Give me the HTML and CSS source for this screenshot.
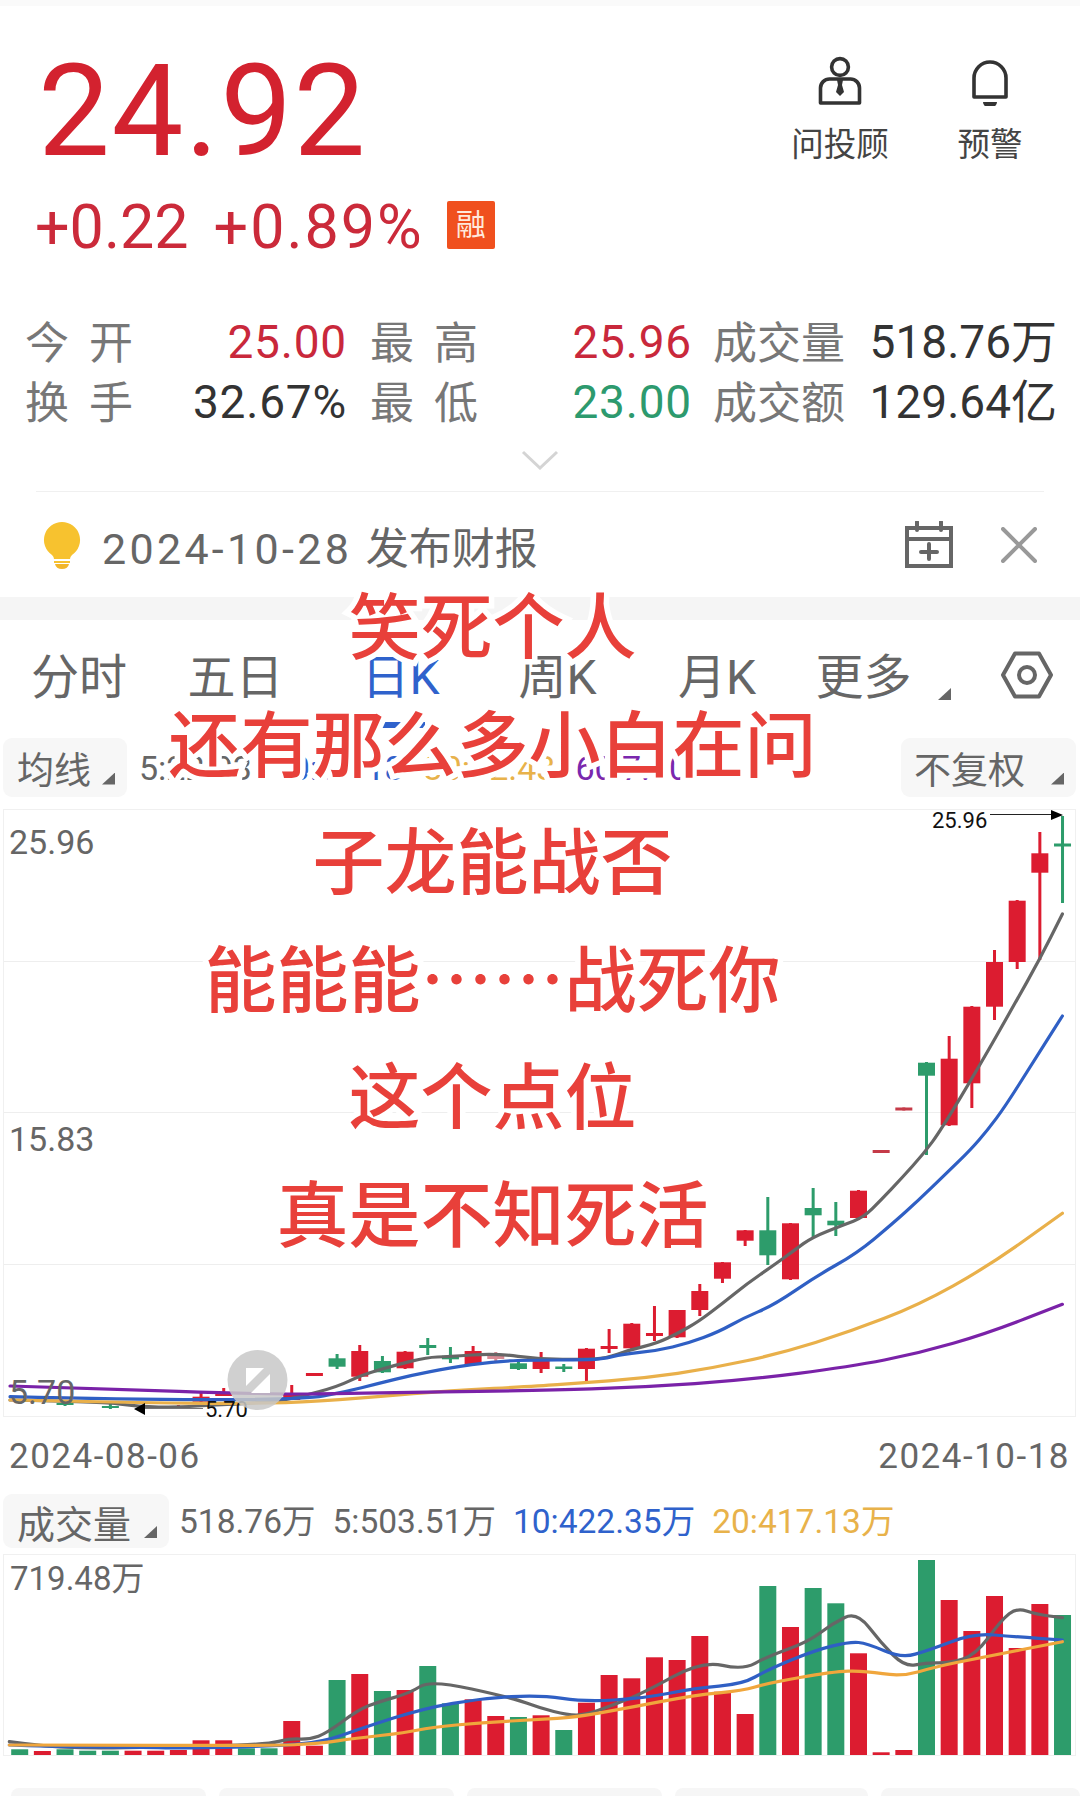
FILE: index.html
```html
<!DOCTYPE html>
<html>
<head>
<meta charset="utf-8">
<meta name="viewport" content="width=device-width, initial-scale=1">
<title>24.92</title>
<link rel="stylesheet" href="styles.css">
</head>
<body>
<div class="page">

  <div class="quote">
    <div class="price-box">
      <div class="price">24.92</div>
      <div class="change">
        <span>+0.22</span>
        <span class="pct">+0.89%</span>
        <span class="rong">融</span>
      </div>
    </div>
    <div class="actions">
      <div class="action">
        <svg width="48" height="50" viewBox="0 0 48 50" fill="none" stroke="#333" stroke-width="3.6">
          <circle cx="24" cy="11" r="8.4"/>
          <path d="M4.5 47V32a9 9 0 0 1 9-9h21a9 9 0 0 1 9 9v15z" stroke-linejoin="round"/>
          <path d="M21 24h6l-1 5 2 7-4 4-4-4 2-7z" fill="#333" stroke="none"/>
        </svg>
        <span>问投顾</span>
      </div>
      <div class="action">
        <svg width="48" height="50" viewBox="0 0 48 50" fill="none" stroke="#333" stroke-width="3.6">
          <path d="M8 41V22a16 16 0 0 1 32 0v19z" stroke-linejoin="round"/>
          <path d="M17 46h14a7 6 0 0 1-14 0z" fill="#333" stroke="none"/>
        </svg>
        <span>预警</span>
      </div>
    </div>
  </div>

  <div class="stats">
    <div class="lbl spaced"><span>今</span><span>开</span></div>
    <div class="val red">25.00</div>
    <div class="lbl spaced"><span>最</span><span>高</span></div>
    <div class="val red">25.96</div>
    <div class="lbl">成交量</div>
    <div class="val cn">518.76万</div>
    <div class="lbl spaced"><span>换</span><span>手</span></div>
    <div class="val">32.67%</div>
    <div class="lbl spaced"><span>最</span><span>低</span></div>
    <div class="val green">23.00</div>
    <div class="lbl">成交额</div>
    <div class="val cn">129.64亿</div>
  </div>

  <div class="expand">
    <svg width="38" height="20" viewBox="0 0 38 20" fill="none" stroke="#d4d4d4" stroke-width="3"><path d="M2 2l17 16L36 2"/></svg>
  </div>

  <div class="notice">
    <svg class="bulb" width="38" height="48" viewBox="0 0 38 48">
      <path d="M19 1a18 18 0 0 1 10 33q-2 2-2 4H11q0-2-2-4A18 18 0 0 1 19 1z" fill="#f7c22f"/>
      <path d="M11 40h16v2H11z" fill="#f7c22f"/>
      <path d="M12 43h14q-1 5-7 5t-7-5z" fill="#f2b62a"/>
    </svg>
    <div class="notice-text"><span class="date">2024-10-28</span> 发布财报</div>
    <svg class="cal" width="50" height="48" viewBox="0 0 50 48" fill="none" stroke="#666" stroke-width="4">
      <path d="M3 7h44v38H3zM3 18h44"/>
      <path d="M13 1v8M37 1v8" stroke-linecap="round"/>
      <path d="M17 31h16M25 23v15" stroke-linecap="round"/>
    </svg>
    <svg class="close" width="36" height="36" viewBox="0 0 36 36" fill="none" stroke="#999" stroke-width="4" stroke-linecap="round"><path d="M2 2l32 32M34 2L2 34"/></svg>
  </div>

  <div class="band"></div>

  <div class="tabs">
    <div>分时</div>
    <div>五日</div>
    <div class="on">日K<i class="bar"></i></div>
    <div>周K</div>
    <div>月K</div>
    <div>更多</div>
    <i class="caret tab-caret"></i>
    <svg class="gear" width="52" height="48" viewBox="0 0 52 48" fill="none" stroke="#666" stroke-width="4">
      <path d="M14 2.5h24L50 24 38 45.5H14L2 24z" stroke-linejoin="round"/>
      <circle cx="26" cy="24" r="8"/>
    </svg>
  </div>

  <div class="legend">
    <div class="pick">均线<i class="caret"></i></div>
    <div class="ma-vals">
      <span>5:22.03</span>
      <span class="blue">10:17.18</span>
      <span class="orange">30:12.43</span>
      <span class="purple">60:7.80</span>
    </div>
    <div class="pick wide">不复权<i class="caret"></i></div>
  </div>

  <svg id="kline" class="chart" width="1080" height="609" viewBox="0 809 1080 609"></svg>

  <div class="dates">
    <span>2024-08-06</span>
    <span>2024-10-18</span>
  </div>

  <div class="legend vol-legend">
    <div class="pick">成交量<i class="caret"></i></div>
    <div class="vol-vals">
      <span>518.76万</span>
      <span>5:503.51万</span>
      <span class="blue">10:422.35万</span>
      <span class="orange">20:417.13万</span>
    </div>
  </div>

  <svg id="volume" class="chart" width="1080" height="204" viewBox="0 1554 1080 204"></svg>

  <div class="foot">
    <div class="f1"></div><div class="f2"></div><div class="f3"></div><div class="f4"></div><div class="f5"></div>
  </div>

  <div class="caption">
    <div>笑死个人</div>
    <div>还有那么多小白在问</div>
    <div>子龙能战否</div>
    <div>能能能……战死你</div>
    <div>这个点位</div>
    <div>真是不知死活</div>
  </div>
</div>
<script src="chart.js"></script>
</body>
</html>
```

FILE: styles.css
```css
* {
  box-sizing: border-box;
}

body {
  margin: 0;
  background-color: #fff;
  font-family: Roboto, "Noto Sans CJK SC", sans-serif;
  color: #666;
}

.page {
  position: relative;
  width: 1080px;
  height: 1796px;
  overflow: hidden;
}

.quote {
  display: flex;
  justify-content: space-between;
  height: 312px;
  padding: 0 15px 0 38px;
  border-top: 6px solid #fafafa;
}

.price {
  margin-top: 35px;
  height: 140px;
  font-size: 128px;
  line-height: 140px;
  letter-spacing: 1.5px;
  color: #d3222f;
}

.change {
  display: flex;
  align-items: center;
  gap: 25px;
  margin: 21px 0 0 -3px;
  height: 50px;
  font-size: 61px;
  line-height: 50px;
  color: #cb2a3a;
}

.pct {
  letter-spacing: 2px;
}

.rong {
  width: 48px;
  height: 48px;
  margin: -4px 0 0 -2px;
  border-radius: 2px;
  background-color: #f0501e;
  color: #ffe9dc;
  font-size: 30px;
  line-height: 48px;
  text-align: center;
}

.actions {
  display: flex;
  padding-top: 50px;
}

.action {
  display: flex;
  flex-direction: column;
  align-items: center;
  width: 150px;
  font-size: 32.5px;
  line-height: 40px;
  color: #444;
}

.action span {
  margin-top: 19px;
}

.stats {
  display: grid;
  grid-template-columns: 108px 214px 133px 212px 158px 207px;
  grid-auto-rows: 60px;
  padding-left: 25px;
  align-items: center;
}

.lbl {
  padding-bottom: 5px;
  font-size: 44px;
  color: #777;
  white-space: nowrap;
}

.lbl.spaced {
  display: flex;
  justify-content: space-between;
  width: 108px;
}

.stats .lbl:nth-child(6n + 3) {
  margin-left: 23px;
}

.stats .lbl:nth-child(6n + 5) {
  margin-left: 21px;
}

.val {
  font-size: 46px;
  line-height: 60px;
  letter-spacing: 0.8px;
  text-align: right;
  color: #333;
  white-space: nowrap;
}

.val.cn {
  letter-spacing: 0;
}

.red {
  color: #c9283b;
}

.green {
  color: #2d9a6e;
}

.expand {
  display: flex;
  justify-content: center;
  align-items: flex-start;
  height: 60px;
  padding: 18px 0 0 0;
  border-bottom: 1px solid #f0f0f0;
  margin: 0 36px;
}

.notice {
  display: flex;
  align-items: center;
  height: 105px;
  padding: 0 43px 0 43px;
  font-size: 43px;
  color: #666;
}

.notice-text {
  margin-left: 21px;
  flex: 1;
}

.date {
  margin-right: 3px;
  letter-spacing: 3.3px;
}

.close {
  margin-left: 47px;
}

.band {
  height: 23px;
  background-color: #f5f5f5;
}

.tabs {
  position: relative;
  display: grid;
  grid-template-columns: 158px 155px 175px 139px 180px 113px;
  height: 118px;
  padding-top: 31px;
  font-size: 48px;
  line-height: 54px;
  text-align: center;
}

.tabs .on {
  position: relative;
  color: #2f62cc;
}

.bar {
  position: absolute;
  left: 62px;
  top: 71px;
  width: 50px;
  height: 6px;
  background-color: #2f62cc;
}

.caret {
  display: inline-block;
  width: 13px;
  height: 12px;
  background-color: #666;
  clip-path: polygon(100% 0, 100% 100%, 0 100%);
}

.tab-caret {
  position: absolute;
  left: 938px;
  top: 68px;
}

.gear {
  position: absolute;
  left: 1001px;
  top: 31px;
}

.legend {
  display: flex;
  height: 71px;
  padding: 0 4px 0 3px;
}

.pick {
  display: flex;
  align-items: center;
  height: 59px;
  padding: 0 12px 0 14px;
  border-radius: 9px;
  background-color: #f7f7f7;
  font-size: 37px;
  white-space: nowrap;
}

.pick .caret {
  margin: 22px 0 0 11px;
}

.pick.wide {
  margin-left: auto;
  padding-left: 13px;
}

.pick.wide .caret {
  margin-left: 26px;
}

.ma-vals {
  display: flex;
  gap: 20px;
  margin-left: 12px;
  font-size: 34px;
  line-height: 60px;
  white-space: nowrap;
}

.blue {
  color: #2f62cc;
}

.orange {
  color: #e8b24a;
}

.purple {
  color: #7a28ae;
}

.chart {
  display: block;
  overflow: visible;
}

.chart text {
  font-family: Roboto, "Noto Sans CJK SC", sans-serif;
}

.dates {
  display: flex;
  justify-content: space-between;
  height: 76px;
  padding: 15px 10px 0 9px;
  font-size: 35px;
  line-height: 48px;
  letter-spacing: 1.5px;
}

.vol-legend {
  height: 60px;
}

.vol-legend .pick {
  height: 54px;
  font-size: 38px;
}

.vol-legend .caret {
  margin-left: 13px;
}

.vol-vals {
  display: flex;
  gap: 17px;
  margin-left: 10px;
  font-size: 33.5px;
  line-height: 56px;
  white-space: nowrap;
}

.foot {
  display: flex;
  gap: 13px;
  margin-top: 30px;
  padding-left: 11px;
}

.foot div {
  height: 10px;
  border-radius: 8px 8px 0 0;
  background-color: #f6f6f6;
}

.f1 { width: 195px; }
.f2 { width: 235px; }
.f3 { width: 195px; }
.f4 { width: 193px; }
.f5 { width: 199px; }

.caption {
  position: absolute;
  left: 0;
  top: 563px;
  width: 985px;
  font-family: "Noto Sans CJK SC", sans-serif;
  font-size: 72px;
  font-weight: 500;
  line-height: 117.5px;
  text-align: center;
  white-space: nowrap;
  color: #e8403a;
  -webkit-text-stroke: 11px #fff;
  paint-order: stroke fill;
}
```

FILE: chart.js
```js
const RED = '#dc1c30';
const GREEN = '#2d9c6b';
const GRAY = '#666666';
const BLUE = '#2f5fc4';
const ORANGE = '#e9b04a';
const PURPLE = '#7a22a8';
const NS = 'http://www.w3.org/2000/svg';

function cx(i) {
  return 19.7 + 22.67 * i;
}

function add(svg, tag, attrs, text) {
  const el = document.createElementNS(NS, tag);
  for (const k in attrs) el.setAttribute(k, attrs[k]);
  if (text) el.textContent = text;
  svg.appendChild(el);
  return el;
}

// smooth line through midpoints
function curve(svg, pts, color) {
  let d = `M${pts[0][0]} ${pts[0][1]}`;
  for (let i = 1; i < pts.length - 1; i++) {
    const mx = (pts[i][0] + pts[i + 1][0]) / 2;
    const my = (pts[i][1] + pts[i + 1][1]) / 2;
    d += `Q${pts[i][0]} ${pts[i][1]} ${mx} ${my}`;
  }
  const last = pts[pts.length - 1];
  d += `L${last[0]} ${last[1]}`;
  add(svg, 'path', { d, fill: 'none', stroke: color, 'stroke-width': 3.2, 'stroke-linecap': 'round' });
}

// index, colour, wick top, body top, body bottom, wick bottom
const candles = [
  [2, GREEN, 1402, 1403, 1405, 1406],
  [4, GREEN, 1404, 1406, 1408, 1409],
  [7, RED, 1405, 1406, 1408, 1408],
  [8, RED, 1393, 1396.7, 1401.7, 1402],
  [9, RED, 1388, 1393, 1396, 1396],
  [12, RED, 1385, 1393.3, 1400, 1400],
  [13, RED, 1373, 1373, 1376, 1376],
  [14, GREEN, 1354, 1358.3, 1366.7, 1369],
  [15, RED, 1345, 1351, 1376.7, 1381],
  [16, GREEN, 1356, 1361, 1372.3, 1373],
  [17, RED, 1351, 1351.7, 1368.3, 1369],
  [18, GREEN, 1338, 1345, 1348, 1355],
  [19, GREEN, 1347, 1355.7, 1359.3, 1363],
  [20, RED, 1346, 1351, 1365, 1366],
  [21, '#d98a94', 1352, 1356, 1359, 1362],
  [22, GREEN, 1362, 1363.3, 1369, 1370],
  [23, RED, 1352, 1360, 1369, 1373],
  [24, GREEN, 1364, 1366.5, 1369, 1372],
  [25, RED, 1348, 1348.7, 1369, 1381],
  [26, RED, 1329, 1346, 1349, 1353],
  [27, RED, 1323, 1323.7, 1348.3, 1349],
  [28, RED, 1306, 1333, 1336, 1341],
  [29, RED, 1310, 1310, 1337.3, 1338],
  [30, RED, 1284, 1291, 1310, 1316],
  [31, RED, 1262, 1262.3, 1278.7, 1283],
  [32, RED, 1230, 1230.3, 1240.7, 1246],
  [33, GREEN, 1197, 1230.3, 1255.3, 1265],
  [34, RED, 1223, 1223.3, 1279.3, 1280],
  [35, GREEN, 1188, 1208, 1215.3, 1237],
  [36, GREEN, 1202, 1220.7, 1225.3, 1236],
  [37, RED, 1190, 1190.7, 1218, 1219],
  [38, '#c53a48', 1150, 1150, 1153, 1153],
  [39, '#c53a48', 1107.5, 1107.5, 1110.5, 1110.5],
  [40, GREEN, 1062, 1062.7, 1075.7, 1155],
  [41, RED, 1036, 1058.7, 1125.3, 1126],
  [42, RED, 1006, 1006.7, 1083.3, 1108],
  [43, RED, 950, 962, 1006.7, 1020],
  [44, RED, 900, 900.7, 962, 969],
  [45, RED, 832, 853.3, 872.7, 960],
  [46, GREEN, 816, 843.5, 846.5, 903]
];

const ma5 = [[10,1400],[103,1401.7],[138,1406.7],[179,1407.3],[275.5,1401.7],[299.6,1396.7],[337.5,1386.7],[361.6,1375],[396,1365],[427,1357.3],[447.7,1356.7],[496,1353.3],[540,1359.3],[585,1359.3],[605.4,1358.3],[629.5,1350],[657,1343.3],[677.7,1333.3],[698.4,1321.7],[722.5,1303.3],[746.6,1284],[774,1265],[794.8,1250],[812,1237.3],[843,1225],[863.7,1217.3],[881,1200],[901.6,1178.3],[924,1153.3],[941,1130],[981,1063.3],[1015,1003.3],[1039.3,960],[1062.4,914]];
const ma10 = [[10,1396.7],[138,1400],[303,1399.3],[344,1392.3],[379,1383.3],[413,1375],[447.7,1368.3],[496,1361],[540,1360],[574.4,1360],[602,1359.3],[622.6,1354],[657,1350.7],[688,1343.3],[719,1331.7],[743,1318.3],[774,1305],[815.5,1276.7],[856.8,1253.3],[891,1225],[918.8,1200],[946.3,1173.3],[970.4,1150],[987.6,1130],[1005,1106.7],[1032.4,1063.3],[1062.4,1016]];
const ma30 = [[10,1400],[103,1401.7],[172,1403.3],[241,1403.3],[299.6,1402.7],[379,1396.7],[447.7,1390.7],[540,1386],[574.4,1383.3],[643.3,1378.3],[712,1368.3],[781,1353.3],[850,1331.7],[918.8,1305],[987.6,1266.7],[1062.4,1213.3]];
const ma60 = [[10,1386],[137.7,1390],[220,1392.7],[292.7,1394.3],[344,1393.3],[540,1390.5],[643.3,1387.3],[746.6,1380],[850,1366.7],[918.8,1353.3],[987.6,1333.3],[1062.4,1304.3]];

const kline = document.getElementById('kline');

add(kline, 'rect', { x: 3.5, y: 809.5, width: 1072, height: 607, fill: 'none', stroke: '#f0f0f0' });
[961.5, 1112.5, 1264.5].forEach(y => {
  add(kline, 'path', { d: `M4 ${y}H1075`, stroke: '#eeeeee' });
});

candles.forEach(c => {
  const x = cx(c[0]);
  add(kline, 'rect', { x: x - 1.5, y: c[2], width: 3, height: c[5] - c[2], fill: c[1] });
  add(kline, 'rect', { x: x - 8.5, y: c[3], width: 17, height: c[4] - c[3], fill: c[1] });
});

curve(kline, ma5, GRAY);
curve(kline, ma10, BLUE);
curve(kline, ma30, ORANGE);
curve(kline, ma60, PURPLE);

const axis = { fill: '#666', 'font-size': 34 };
add(kline, 'text', { ...axis, x: 9, y: 854 }, '25.96');
add(kline, 'text', { ...axis, x: 9, y: 1151 }, '15.83');
add(kline, 'text', { ...axis, x: 9, y: 1404 }, '5.70');

const mark = { fill: '#111', 'font-size': 22 };
add(kline, 'text', { ...mark, x: 932, y: 828 }, '25.96');
add(kline, 'path', { d: 'M990 814.5H1052', stroke: '#222' });
add(kline, 'path', { d: 'M1051 810L1063 815L1051 820z', fill: '#000' });
add(kline, 'text', { ...mark, x: 205, y: 1417 }, '5.70');
add(kline, 'path', { d: 'M145 1408.5H203', stroke: '#777' });
add(kline, 'path', { d: 'M145 1403L134 1409L145 1415z', fill: '#000' });

// play badge over the chart
add(kline, 'circle', { cx: 257.5, cy: 1380, r: 30, fill: '#c8c8c8', opacity: 0.85 });
add(kline, 'path', { d: 'M246 1368H264L246 1386z', fill: '#fff' });
add(kline, 'path', { d: 'M270 1374V1393H251z', fill: '#fff' });

const volume = document.getElementById('volume');
const bars = [
  [GREEN,1749.3],[RED,1751],[GREEN,1749.3],[GREEN,1750.7],[GREEN,1750.7],[RED,1750.7],[RED,1750.7],[RED,1750],
  [RED,1740.3],[RED,1740.3],[GREEN,1748.3],[GREEN,1748.3],[RED,1721],[RED,1745.7],[GREEN,1680],[RED,1674],
  [GREEN,1691],[RED,1690],[GREEN,1666],[GREEN,1703.3],[RED,1699.3],[RED,1716],[GREEN,1717],[RED,1715.3],
  [GREEN,1730],[RED,1702.7],[RED,1675],[RED,1678.3],[RED,1657.3],[RED,1660],[RED,1636],[RED,1691.7],
  [RED,1714],[GREEN,1586],[RED,1627],[GREEN,1588],[GREEN,1603.3],[RED,1653.3],[RED,1752.3],[RED,1750],
  [GREEN,1560],[RED,1600],[RED,1631],[RED,1596],[RED,1648],[RED,1604],[GREEN,1615]
];

const vma5 = [[9.3,1741.7],[44.8,1746.7],[103,1748.3],[206.6,1746],[268.6,1744],[289,1738.7],[310,1739.3],[327,1733],[358,1710],[379,1701.7],[410,1693],[430.4,1680],[513,1698],[540,1708],[567.5,1715],[585,1715],[609,1706.7],[643.3,1693],[702,1660.7],[743,1670],[767,1656.7],[808.6,1641.7],[832.7,1623.3],[856.8,1611.7],[881,1643],[905,1667],[925.7,1662.7],[949.8,1663],[975.6,1655],[1001.4,1620],[1017,1607.7],[1036,1614.3],[1062.4,1617.7]];
const vma10 = [[9.3,1745],[45,1746.7],[138,1747.3],[193,1748.3],[275.5,1746],[323.7,1741.7],[361.6,1728.3],[423.6,1708.3],[482,1698.3],[540,1695],[584.8,1701.7],[643.3,1698.3],[695,1688.3],[743,1684],[767,1670],[815.5,1650],[850,1641.7],[867,1643.3],[901.6,1658.3],[929,1650],[974,1633.3],[1015,1636.7],[1062.4,1640]];
const vma20 = [[9.3,1745],[45,1745],[275.5,1745.7],[320,1743.3],[354.7,1738.3],[406,1732.7],[430.4,1727.3],[482,1722.7],[540,1719.3],[574.4,1717.3],[626,1708.3],[695,1695],[743,1690.7],[767,1683.3],[832.7,1671.7],[863.7,1670.7],[901.6,1676.7],[936,1666.7],[977.3,1658.3],[1062.4,1641.7]];

add(volume, 'rect', { x: 3.5, y: 1554.5, width: 1072, height: 201, fill: 'none', stroke: '#f0f0f0' });

bars.forEach((b, i) => {
  add(volume, 'rect', { x: cx(i) - 8.5, y: b[1], width: 17, height: 1755 - b[1], fill: b[0] });
});

curve(volume, vma5, GRAY);
curve(volume, vma10, BLUE);
curve(volume, vma20, '#f0a63c');

add(volume, 'text', { ...axis, 'font-size': 33, x: 10, y: 1590 }, '719.48万');
```
